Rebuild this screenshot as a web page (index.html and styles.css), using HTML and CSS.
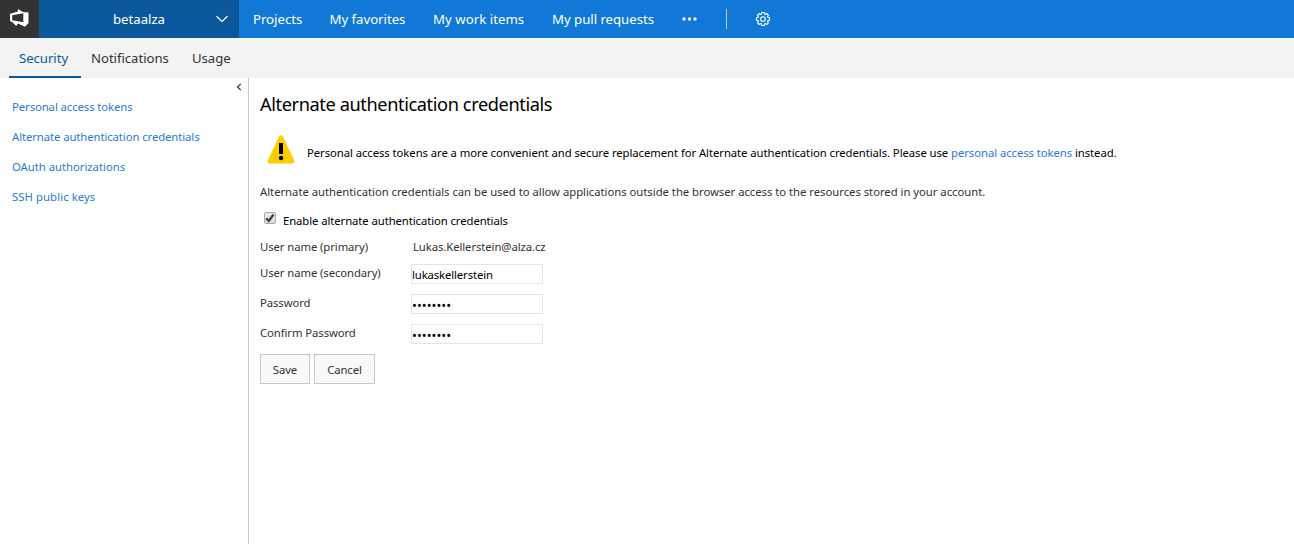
FILE: index.html
```html
<!DOCTYPE html>
<html lang="en">
<head>
<meta charset="utf-8">
<title>Security - Alternate authentication credentials</title>
<link rel="stylesheet" href="styles.css">
</head>
<body>
<header class="topbar">
  <a class="logo"><svg width="20" height="20" viewBox="0 0 20 20"><path fill="#fff" fill-rule="evenodd" d="M9 1 13.800 4 19.500 4.500V15L16 18.800 9 15.500 7.200 18 3.800 14.400 1 13V5.700L8.800 3.500ZM3.200 7.200V12.300L14.300 14.300V5.200Z"/></svg></a>
  <div class="account"><span class="account-name">betaalza</span><svg class="chevron" width="14" height="8" viewBox="0 0 14 8"><path d="M1.500 1.200 7 6.500 12.500 1.200" fill="none" stroke="#fff" stroke-width="1.200"/></svg></div>
  <nav class="nav">
    <a class="projects">Projects</a><a class="favorites">My favorites</a><a class="work">My work items</a><a class="pulls">My pull requests</a>
    <svg class="dots" width="15" height="4" viewBox="0 0 15 4" fill="#fff"><circle cx="2" cy="2" r="1.700"/><circle cx="7.500" cy="2" r="1.700"/><circle cx="13" cy="2" r="1.700"/></svg>
    <span class="divider"></span>
    <svg class="gear" width="16" height="16" viewBox="-8 -8 16 16" fill="none" stroke="#fff" stroke-width="1.100"><path d="M-1.300-6.500H1.300L1.500-5 2.600-4.600 3.800-5.500 5.500-3.800 4.600-2.600 5-1.500 6.500-1.300V1.300L5 1.500 4.600 2.600 5.500 3.800 3.800 5.500 2.600 4.600 1.500 5 1.300 6.500H-1.300L-1.500 5-2.600 4.600-3.800 5.500-5.500 3.800-4.600 2.600-5 1.500-6.500 1.300V-1.300L-5-1.500-4.600-2.600-5.500-3.800-3.800-5.500-2.600-4.600-1.500-5Z"/><circle r="2.300"/></svg>
  </nav>
</header>
<nav class="tabs"><a class="tab active">Security</a><a class="tab">Notifications</a><a class="tab">Usage</a></nav>
<div class="layout">
  <aside class="sidebar">
    <svg class="collapse" width="6" height="8" viewBox="0 0 6 8"><path d="M4.800 1 1.500 4 4.800 7" fill="none" stroke="#444" stroke-width="1.300"/></svg>
    <a>Personal access tokens</a><a>Alternate authentication credentials</a><a class="oauth">OAuth authorizations</a><a class="ssh">SSH public keys</a>
  </aside>
  <main class="content">
    <h1>Alternate authentication credentials</h1>
    <div class="warning">
      <svg width="28" height="29" viewBox="0 0 28 29"><path fill="#fc0" d="M12.200 1.200Q14 -.7 15.800 1.200L27.300 25.500Q28 28.300 25.500 28.500H2.500Q0 28.300.7 25.500Z"/><path d="M12 8h4v11h-4z"/><circle cx="14" cy="23" r="2.200"/></svg>
      <p>Personal access tokens are a more convenient and secure replacement for Alternate authentication credentials. Please use <a>personal access tokens</a> instead.</p>
    </div>
    <p class="description">Alternate authentication credentials can be used to allow applications outside the browser access to the resources stored in your account.</p>
    <label class="enable"><span class="check"><svg width="10" height="10" viewBox="0 0 10 10"><path d="M1.200 5.300 3.800 8 8.500 1.500" fill="none" stroke="#444" stroke-width="2.400"/></svg></span><span>Enable alternate authentication credentials</span></label>
    <form class="form">
      <div class="row primary"><label>User name (primary)</label><span class="email">Lukas.Kellerstein@alza.cz</span></div>
      <div class="row"><label>User name (secondary)</label><input type="text" value="lukaskellerstein"></div>
      <div class="row"><label>Password</label><span class="field">••••••••</span></div>
      <div class="row"><label>Confirm Password</label><span class="field">••••••••</span></div>
      <div class="actions"><button type="button" class="save">Save</button><button type="button" class="cancel">Cancel</button></div>
    </form>
  </main>
</div>
</body>
</html>
```
FILE: styles.css
```css
* { box-sizing: border-box; }
body { margin: 0; height: 544px; overflow: hidden; background: #fff; color: #333; font: 11.3px/20px "Noto Sans", sans-serif; letter-spacing: -.08px; }
svg { display: block; flex: none; }
.topbar { display: flex; height: 38px; background: #1078d7; color: #fff; font-size: 13.2px; letter-spacing: -.02px; }
.logo { display: flex; width: 39px; padding: 8px 0 0 9px; background: #333; }
.account { display: flex; align-items: center; width: 200px; padding: 0 10px 0 74px; background: #0b599c; }
.account-name { flex: 1; }
.nav { display: flex; align-items: center; padding-left: 14px; }
.nav a { white-space: nowrap; flex: none; }
.projects { width: 76.500px; }
.favorites { width: 103.500px; }
.work { width: 119px; letter-spacing: .04px; }
.pulls { width: 130px; }
.dots { margin-right: 29px; }
.divider { width: 1px; height: 20px; background: #c8c8c8; margin-right: 28px; }
.tabs { display: flex; height: 40px; padding-left: 9px; background: #f3f3f3; font-size: 13.2px; letter-spacing: -.05px; }
.tab { height: 40px; padding: 10px 0 0 10px; width: 72px; }
.tab:nth-child(2) { width: 101px; }
.active { color: #0b599c; border-bottom: 2px solid #0b599c; }
.layout { display: flex; height: 466px; }
.sidebar { display: flex; flex-direction: column; width: 249px; padding: 5px 6px 0 12px; border-right: 1px solid #c8c8c8; }
.sidebar a { height: 30px; }
.sidebar .oauth { letter-spacing: -.02px; }
.sidebar .ssh { letter-spacing: .08px; }
.collapse { align-self: flex-end; margin-bottom: 6px; }
.sidebar a, .warning a { color: #2b7dd2; }
.content { flex: 1; padding: 14px 0 0 11px; }
h1 { margin: 0; color: #000; font-size: 18.2px; line-height: 24px; font-weight: 400; letter-spacing: -.4px; }
.warning { display: flex; gap: 12px; margin: 19px 0 0 7px; color: #000; letter-spacing: -.064px; }
.warning p { margin: 8px 0 0; }
.description { margin: 18px 0 0; letter-spacing: -.065px; letter-spacing: -.025px; }
.enable { display: flex; height: 20px; gap: 7px; margin: 9px 0 0 4px; color: #000; }
.check { width: 12px; height: 12px; margin-top: 1px; border: 1px solid #aaa; border-radius: 2px; background: linear-gradient(#eee, #ddd); }
.row { display: grid; grid-template-columns: 151px 132px; height: 30px; }
.primary { height: 26px; margin-top: 6px; }
.email { padding-left: 2px; }
.row input, .field { width: 132px; height: 20px; margin: 1px 0 0; padding: 0; border: 1px solid #e5e5e5; background: #fff; color: #000; font: inherit; line-height: 19px; }
.row input { letter-spacing: -.12px; }
.field { font-size: 13px; line-height: 20px; letter-spacing: 0; }
.actions { display: flex; gap: 4px; margin-top: 1px; }
button { height: 30px; padding: 2px 0 0; border: 1px solid #c8c8c8; background: #f8f8f8; color: #333; font: inherit; letter-spacing: inherit; }
.save { width: 50px; }
.cancel { width: 61px; }
```
